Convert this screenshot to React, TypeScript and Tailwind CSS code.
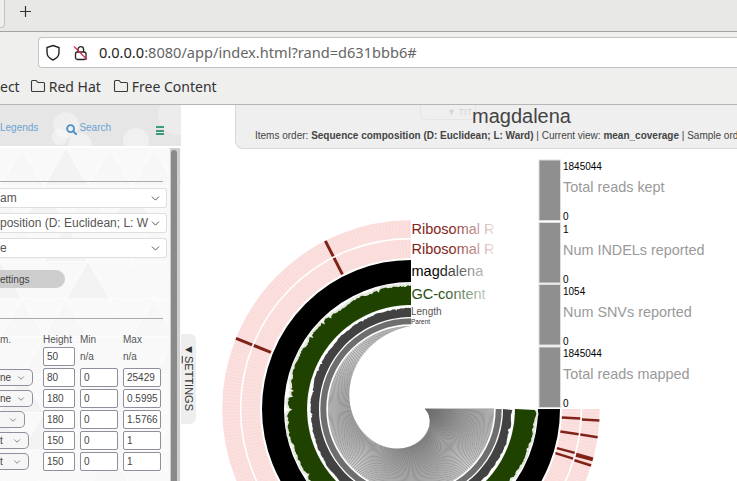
import { ChevronDown } from "lucide-react";

const cx = 411;
const cy = 409;

function polar(r: number, deg: number) {
  // deg runs counter-clockwise from 12 o'clock
  const a = (deg * Math.PI) / 180;
  return [cx - r * Math.sin(a), cy - r * Math.cos(a)];
}

function arc(r: number) {
  return `M ${cx} ${cy - r} A ${r} ${r} 0 1 0 ${cx + r} ${cy}`;
}

function noise(i: number) {
  const x = Math.sin(i * 12.9898) * 43758.5453;
  return x - Math.floor(x);
}

function noisyRing(inner: number, outer: number, amp: number, seed: number, step = 0.7) {
  const pts: string[] = [];
  let drift = 0;
  for (let d = 0; d <= 270; d += step) {
    drift = drift * 0.8 + (noise(d + seed) - 0.5) * amp;
    const spike = noise(d * 3 + seed) > 0.97 ? -amp * 1.5 : 0;
    const [x, y] = polar(outer + drift + spike, d);
    pts.push(`${x.toFixed(1)},${y.toFixed(1)}`);
  }
  for (let d = 270; d >= 0; d -= 2) {
    const [x, y] = polar(inner, d);
    pts.push(`${x.toFixed(1)},${y.toFixed(1)}`);
  }
  return pts.join(" ");
}

function spiral(d: number) {
  return 83 - (d / 270) * 69;
}

function Dendrogram() {
  const radials = [];
  for (let d = 0; d <= 270; d += 0.75) {
    const [x1, y1] = polar(83, d);
    const [x2, y2] = polar(spiral(d), d);
    radials.push(<line key={d} x1={x1} y1={y1} x2={x2} y2={y2} />);
  }
  return (
    <g stroke="#6c6c6c" strokeWidth={0.68}>
      {radials}
    </g>
  );
}

function Mark({ r1, r2, deg, w = 3 }: { r1: number; r2: number; deg: number; w?: number }) {
  const [x1, y1] = polar(r1, deg);
  const [x2, y2] = polar(r2, deg);
  return <line x1={x1} y1={y1} x2={x2} y2={y2} stroke="#7f2318" strokeWidth={w} />;
}

function PinkRing({ r, w, marks }: { r: number; w: number; marks: [number, number?][] }) {
  return (
    <g>
      <path d={arc(r)} fill="none" stroke="#fadcdb" strokeWidth={w} />
      <path d={arc(r)} fill="none" stroke="#fce6e5" strokeWidth={w} strokeDasharray="0.6 2.6" />
      {marks.map(([deg, mw]) => (
        <Mark key={deg} r1={r - w / 2} r2={r + w / 2} deg={deg} w={mw ?? 3} />
      ))}
    </g>
  );
}

const bars = [
  { y: 160, top: "1845044", label: "Total reads kept" },
  { y: 222.5, top: "1", label: "Num INDELs reported" },
  { y: 284.5, top: "1054", label: "Num SNVs reported" },
  { y: 347, top: "1845044", label: "Total reads mapped" },
];

function Chart() {
  return (
    <svg viewBox="181 149 556 332" className="block h-[332px] w-[556px] font-['Liberation_Sans',sans-serif]">
      <defs>
        <linearGradient id="fadeRed" gradientUnits="userSpaceOnUse" x1="450" y1="0" x2="496" y2="0">
          <stop offset="0" stopColor="#7f2318" />
          <stop offset="1" stopColor="#7f2318" stopOpacity="0.1" />
        </linearGradient>
        <linearGradient id="fadeBlack" gradientUnits="userSpaceOnUse" x1="435" y1="0" x2="486" y2="0">
          <stop offset="0" stopColor="#000" />
          <stop offset="1" stopColor="#000" stopOpacity="0.25" />
        </linearGradient>
        <linearGradient id="fadeGreen" gradientUnits="userSpaceOnUse" x1="440" y1="0" x2="488" y2="0">
          <stop offset="0" stopColor="#1f4a10" />
          <stop offset="1" stopColor="#1f4a10" stopOpacity="0.25" />
        </linearGradient>
      </defs>

      <PinkRing r={180} w={17.5} marks={[[27], [68], [266.5, 2.5], [261.4, 2.5], [254.5, 4], [252.6, 2.5]]} />
      <PinkRing r={160.3} w={18.5} marks={[[27], [68], [266.8, 2.5], [261.4, 2.5], [255, 2.5], [253, 2.5]]} />
      <path d={arc(138)} fill="none" stroke="#000" strokeWidth={22} />
      <polygon points={noisyRing(103.5, 125.5, 1.8, 11)} fill="#e2e8de" />
      <polygon points={noisyRing(104, 123, 2, 11)} fill="#1f4200" />
      <polygon points={noisyRing(92, 100.8, 0.9, 5)} fill="#424242" />
      <path d={arc(87.7)} fill="none" stroke="#6e6e6e" strokeWidth={6} />
      <Dendrogram />

      <text x={411.5} y={234} fontSize={14.5} fill="url(#fadeRed)">Ribosomal R</text>
      <text x={411.5} y={254} fontSize={14.5} fill="url(#fadeRed)">Ribosomal R</text>
      <text x={411.5} y={276} fontSize={14.5} fill="url(#fadeBlack)">magdalena</text>
      <text x={411.5} y={299} fontSize={14.5} fill="url(#fadeGreen)">GC-content</text>
      <text x={411} y={315} fontSize={10} fill="#555">Length</text>
      <text x={411} y={324} fontSize={6.5} fill="#333">Parent</text>

      {bars.map((b) => (
        <g key={b.y}>
          <rect x={539} y={b.y} width={21.5} height={60.5} fill="#8f8f8f" stroke="#dedede" />
          <text x={563} y={b.y + 10} fontSize={10} fill="#000">{b.top}</text>
          <text x={563} y={b.y + 32} fontSize={14.4} fill="#999">{b.label}</text>
          <text x={563} y={b.y + 60} fontSize={10} fill="#000">0</text>
        </g>
      ))}
    </svg>
  );
}

function PanelPattern() {
  const tris = [];
  const s = 44;
  const h = 38;
  for (let row = 0; row < 10; row++) {
    for (let col = -1; col < 6; col++) {
      const ox = col * s + (row % 2 ? s / 2 : 0);
      const oy = row * h;
      const tone = noise(row * 7 + col * 13 + 3);
      tris.push(
        <polygon
          key={`${row}-${col}`}
          points={`${ox},${oy + h} ${ox + s / 2},${oy} ${ox + s},${oy + h}`}
          fill={tone > 0.75 ? "#f3f3f3" : tone > 0.35 ? "#f7f7f7" : "#f9f9f9"}
          stroke="#fdfdfd"
        />
      );
    }
  }
  return (
    <svg className="absolute inset-0 h-full w-full" viewBox="0 0 181 335" preserveAspectRatio="none">
      <rect width="181" height="335" fill="#f9f9f9" />
      {tris}
    </svg>
  );
}

const selectRows = [
  { text: "am" },
  { text: "position (D: Euclidean; L: W" },
  { text: "e" },
];

const layerRows = [
  { label: "ne", w: "w-[33px]", h: "80", min: "0", max: "25429" },
  { label: "ne", w: "w-[33px]", h: "180", min: "0", max: "0.5995" },
  { label: "", w: "w-[25px]", h: "180", min: "0", max: "1.5766" },
  { label: "t", w: "w-[29px]", h: "150", min: "0", max: "1" },
  { label: "t", w: "w-[29px]", h: "150", min: "0", max: "1" },
];

function Field({ value, w }: { value: string; w: string }) {
  return (
    <div className={`${w} flex h-[19px] items-center rounded-[2px] border border-[#8f8f9d] bg-white pl-[3px] text-[10px] text-[#444]`}>
      {value}
    </div>
  );
}

function SidePanel() {
  return (
    <aside className="relative h-[376px] w-[181px] shrink-0 overflow-hidden font-['Liberation_Sans',sans-serif]">
      <div className="relative flex h-[41px] items-center overflow-hidden bg-[#e6e6e6] text-[10px] text-[#6ba3d3]">
        <svg className="absolute inset-0 h-full w-full" viewBox="0 0 181 41">
          <circle cx="66" cy="20" r="13" fill="#fff" opacity="0.35" />
          <circle cx="60" cy="32" r="8" fill="#fff" opacity="0.4" />
          <circle cx="136" cy="36" r="13" fill="#fff" opacity="0.4" />
          <circle cx="80" cy="40" r="12" fill="#fff" opacity="0.4" />
          <circle cx="178" cy="10" r="20" fill="#fff" opacity="0.25" />
        </svg>
        <span className="relative mt-[4px]">Legends</span>
        <svg className="relative ml-[28px] mt-[7px] h-[11px] w-[11px]" viewBox="0 0 12 12" fill="none" stroke="#4a90c8" strokeWidth="2">
          <circle cx="5" cy="5" r="3.8" />
          <path d="M8 8l3.2 3.2" strokeLinecap="round" />
        </svg>
        <span className="relative ml-[2px] mt-[4px]">Search</span>
        <div className="relative ml-[45px] mt-[10px] flex w-[8px] flex-col gap-[1.5px]">
          <div className="h-[2px] bg-[#3d9a80]" />
          <div className="h-[2px] bg-[#3d9a80]" />
          <div className="h-[2px] bg-[#3d9a80]" />
        </div>
      </div>

      <div className="relative h-[335px] border-t-2 border-[#fff]">
        <PanelPattern />
        <div className="absolute bottom-0 right-[1px] top-0 w-[10px] bg-[#cfcfcf]">
          <div className="ml-[1px] mt-[2px] h-full w-[6px] rounded-[3px] bg-[#8a8a8a]" />
        </div>

        <div className="relative flex w-[167px] flex-col pt-[33px]">
          <div className="h-px w-[163px] bg-[#aaa]" />
          <div className="mt-[6px] flex flex-col gap-[5px]">
            {selectRows.map((row) => (
              <div key={row.text} className="flex h-[20px] items-center justify-between rounded-r-[3px] border border-l-0 border-[#dedede] bg-white pr-[4px] text-[12px] text-[#555]">
                <span className="whitespace-nowrap">{row.text}</span>
                <ChevronDown size={13} strokeWidth={1.5} color="#333" />
              </div>
            ))}
          </div>
          <div className="mt-[12px] flex h-[18px] w-[65px] items-center rounded-r-[9px] bg-[#cdcdcd] text-[10px] text-[#444]">ettings</div>
          <div className="mt-[30px] h-px w-[163px] bg-[#aaa]" />

          <div className="mt-[14px] flex h-[12px] items-center text-[10px] text-[#555]">
            <span className="w-[43px]">m.</span>
            <span className="w-[37px]">Height</span>
            <span className="w-[43px]">Min</span>
            <span>Max</span>
          </div>
          <div className="mt-[2px] flex items-center text-[10px] text-[#555]">
            <div className="ml-[43px] w-[37px]"><Field value="50" w="w-[32px]" /></div>
            <span className="w-[43px]">n/a</span>
            <span>n/a</span>
          </div>
          <div className="mt-[2px] flex flex-col gap-[2px]">
            {layerRows.map((row, i) => (
              <div key={i} className="flex items-center text-[10px]">
                <div className="w-[43px]">
                  <div className={`${row.w} flex h-[17px] items-center justify-between rounded-r-[5px] border border-l-0 border-[#8f8f9d] bg-[#f6f6f6] pr-[6px] text-[10px] text-[#444]`}>
                    <span>{row.label}</span>
                    <ChevronDown size={10} strokeWidth={1.5} />
                  </div>
                </div>
                <div className="w-[37px]"><Field value={row.h} w="w-[32px]" /></div>
                <div className="w-[43px]"><Field value={row.min} w="w-[38px]" /></div>
                <Field value={row.max} w="w-[38px]" />
              </div>
            ))}
          </div>
        </div>
      </div>
    </aside>
  );
}

function Folder() {
  return (
    <svg width="16" height="14" viewBox="0 0 16 14" fill="none" stroke="#3a3a3a" strokeWidth="1.1" className="shrink-0">
      <path d="M1.5 11.5V2.5a1 1 0 0 1 1-1h3.6l1.7 2h5.7a1 1 0 0 1 1 1v7a1 1 0 0 1-1 1h-11a1 1 0 0 1-1-1z" />
    </svg>
  );
}

export default function App() {
  return (
    <div className="flex h-[481px] w-[737px] flex-col overflow-hidden bg-white">
      {/* browser chrome */}
      <div className="relative h-[32px] border-b border-[#a3a3a3] bg-[#e8e8e7] font-['Noto_Sans',sans-serif]">
        <div className="h-[28px] w-[5px] rounded-br-[4px] border-b border-r border-[#c4c4c4] bg-[#efefee]" />
        <svg className="absolute left-[19px] top-[5px]" width="13" height="13" viewBox="0 0 13 13" stroke="#333" strokeWidth="1.2">
          <path d="M6.5 1v11M1 6.5h11" />
        </svg>
      </div>
      <div className="flex h-[36px] items-end border-b-0 bg-[#efefee]">
        <div className="ml-[38px] flex h-[31px] flex-1 items-center rounded-l-[4px] border border-r-0 border-[#c2c2c2] bg-white font-['Noto_Sans',sans-serif] text-[14.6px]">
          <svg className="ml-[6px]" width="16" height="17" viewBox="0 0 16 17" fill="none" stroke="#222" strokeWidth="1.4">
            <path d="M8 1.5l6 2v5c0 3.5-2.6 6-6 7.5-3.4-1.5-6-4-6-7.5v-5z" />
          </svg>
          <svg className="ml-[12px]" width="15" height="16" viewBox="0 0 15 16" fill="none">
            <path d="M5 7V4.5a2.8 2.8 0 0 1 5.6 0V7" stroke="#222" strokeWidth="1.3" />
            <rect x="2.5" y="7" width="10.5" height="7.5" rx="2" stroke="#222" strokeWidth="1.3" />
            <path d="M1 1.5l13 13" stroke="#e22850" strokeWidth="1.3" />
          </svg>
          <span className="ml-[11px] whitespace-nowrap text-[#666]">
            <span className="text-[#222]">0.0.0.0</span>:8080/app/index.html?rand=d631bbb6#
          </span>
        </div>
      </div>
      <div className="flex h-[37px] items-center overflow-hidden border-b border-[#b5b5b5] bg-[#efefee] font-['Noto_Sans',sans-serif] text-[14px] text-[#333]">
        <span>ect</span>
        <div className="ml-[10px] flex items-center gap-[3px]"><Folder />Red Hat</div>
        <div className="ml-[12px] flex items-center gap-[3px]"><Folder />Free Content</div>
      </div>

      {/* page */}
      <div className="relative flex flex-1">
        <SidePanel />
        <div className="absolute left-[181px] top-[229px] flex h-[90px] w-[15px] flex-col items-center rounded-r-[6px] bg-[#eeeeee] pt-[10px] font-['Liberation_Sans',sans-serif] text-[11px] text-[#333]">
          <span className="text-[9px] leading-[10px]">◀</span>
          <span className="mt-[2px] [writing-mode:vertical-rl]"><span className="underline">S</span>ETTINGS</span>
        </div>
        <div className="flex-1 font-['Liberation_Sans',sans-serif]">
          <div className="relative ml-[54px] h-[44px] overflow-hidden whitespace-nowrap rounded-bl-[8px] border-b border-l border-[#d8d8d8] bg-[#efefef]">
            <div className="absolute left-[184px] top-0 flex h-[15px] w-[56px] items-end rounded-b-[6px] border border-t-0 border-[#e6e6e6] pl-[26px] text-[9px] text-[#d5d5d5]">▼&nbsp;TIT</div>
            <div className="relative pl-[236px] text-[20px] leading-[22px] text-[#444]">magdalena</div>
            <div className="mt-[2px] pl-[19px] text-[10px] leading-[14px] text-[#444]">
              Items order: <b>Sequence composition (D: Euclidean; L: Ward)</b> | Current view: <b>mean_coverage</b> | Sample ord
            </div>
          </div>
          <Chart />
        </div>
      </div>
    </div>
  );
}
